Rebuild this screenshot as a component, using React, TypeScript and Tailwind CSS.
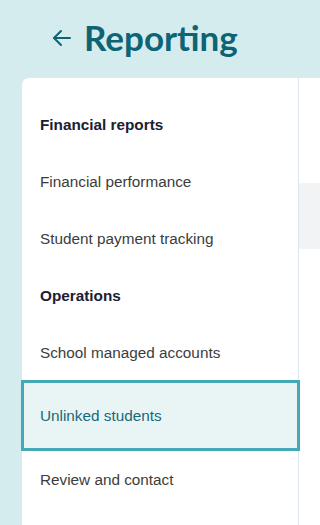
import React from 'react';

const items = [
	{ label: 'Financial reports', heading: true },
	{ label: 'Financial performance' },
	{ label: 'Student payment tracking' },
	{ label: 'Operations', heading: true },
	{ label: 'School managed accounts' },
	{ label: 'Unlinked students', active: true },
	{ label: 'Review and contact' },
];

export default function App() {
	return (
		<div className="min-h-screen w-[320px] h-[525px] overflow-hidden bg-[#d5ecee] pl-[22px] font-['Liberation_Sans']">
			<header className="flex h-[78px] items-center pl-[30px] pb-[4px] text-[#0c6475]">
				<svg width="20" height="20" viewBox="0 0 20 20" fill="none" stroke="currentColor" strokeWidth="2" strokeLinecap="round" strokeLinejoin="round" className="mr-[12px] mt-[2px]">
					<path d="M18 10H2" />
					<path d="M9 3L2 10l7 7" />
				</svg>
				<h1 className="font-['Lato'] text-[35px] font-bold leading-none">Reporting</h1>
			</header>

			<div className="flex h-[447px] rounded-tl-[7px] bg-white">
				<nav className="w-[277px] shrink-0 border-r border-[#dde5ef] pt-[18px]">
					{items.map((item) => {
						if (item.active) {
							return (
								<div key={item.label} className="-ml-px -mr-[2px] -mt-px border-[3px] border-[#45a8b7] bg-[#e9f5f5] py-[22px] pl-[16px] text-[15.3px] leading-[21px] text-[#176a79]">
									{item.label}
								</div>
							);
						}
						return (
							<div
								key={item.label}
								className={item.heading
									? 'py-[18px] pl-[18px] text-[15.3px] font-bold leading-[21px] text-[#1a2032]'
									: 'py-[18px] pl-[18px] text-[15.3px] leading-[21px] text-[#3c3c3c]'}
							>
								{item.label}
							</div>
						);
					})}
				</nav>
				<div className="flex-1">
					<div className="mt-[105px] h-[66px] bg-[#f2f3f5]" />
				</div>
			</div>
		</div>
	);
}
